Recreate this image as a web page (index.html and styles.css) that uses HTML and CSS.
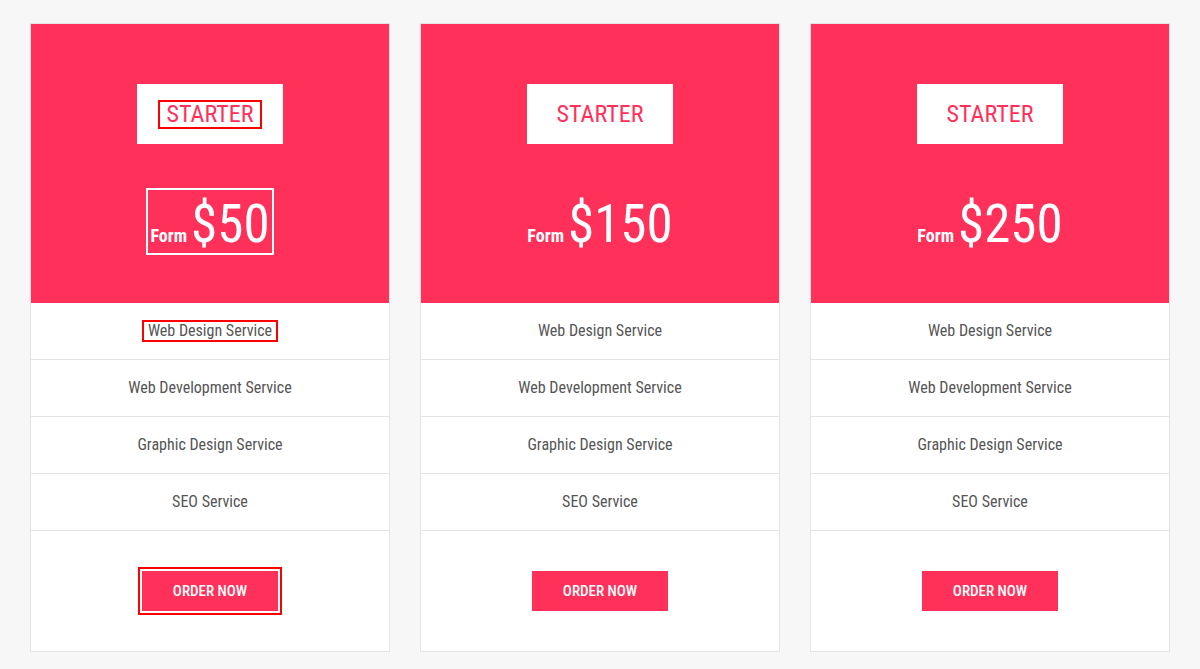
FILE: index.html
```html
<!DOCTYPE html>
<html lang="en">
<head>
<meta charset="utf-8">
<title>Pricing</title>
<link rel="stylesheet" href="styles.css">
</head>
<body>
<div class="pricing">
  <div class="card">
    <div class="card-head">
      <div class="plan"><span class="plan-name hl">STARTER</span></div>
      <div class="price hl-white"><span class="from">Form</span><span class="amount">$50</span></div>
    </div>
    <ul class="features">
      <li><span class="hl">Web Design Service</span></li>
      <li><span>Web Development Service</span></li>
      <li><span>Graphic Design Service</span></li>
      <li><span>SEO Service</span></li>
    </ul>
    <div class="card-foot"><a class="btn hl-btn" href="#">ORDER NOW</a></div>
  </div>
  <div class="card">
    <div class="card-head">
      <div class="plan"><span class="plan-name">STARTER</span></div>
      <div class="price"><span class="from">Form</span><span class="amount">$150</span></div>
    </div>
    <ul class="features">
      <li><span>Web Design Service</span></li>
      <li><span>Web Development Service</span></li>
      <li><span>Graphic Design Service</span></li>
      <li><span>SEO Service</span></li>
    </ul>
    <div class="card-foot"><a class="btn" href="#">ORDER NOW</a></div>
  </div>
  <div class="card">
    <div class="card-head">
      <div class="plan"><span class="plan-name">STARTER</span></div>
      <div class="price"><span class="from">Form</span><span class="amount">$250</span></div>
    </div>
    <ul class="features">
      <li><span>Web Design Service</span></li>
      <li><span>Web Development Service</span></li>
      <li><span>Graphic Design Service</span></li>
      <li><span>SEO Service</span></li>
    </ul>
    <div class="card-foot"><a class="btn" href="#">ORDER NOW</a></div>
  </div>
</div>
</body>
</html>
```
FILE: styles.css
```css
* { box-sizing: border-box; }
html, body { margin: 0; padding: 0; }
body {
  background: #f7f7f7;
  font-family: "Roboto", "Liberation Sans", sans-serif;
  font-stretch: condensed;
}
.pricing {
  display: grid;
  grid-template-columns: repeat(3, 360px);
  gap: 30px;
  padding: 23px 30px 17px;
}
.card {
  background: #fff;
  border: 1px solid #e4e4e4;
}
.card-head {
  background: #ff305a;
  height: 279px;
  padding-top: 60px;
  display: flex;
  flex-direction: column;
  align-items: center;
}
.plan {
  width: 146px;
  height: 60px;
  background: #fff;
  display: flex;
  align-items: center;
  justify-content: center;
}
.plan-name {
  color: #ff305a;
  font-size: 24px;
  line-height: 25px;
  padding: 0 7px;
  border: 2px solid transparent;
}
.plan-name.hl { border-color: #f00; }
.price {
  margin-top: 44px;
  height: 67px;
  padding: 0 2px 0 2px;
  display: flex;
  align-items: flex-end;
  color: #fff;
  border: 2px solid transparent;
}
.price.hl-white { border-color: #fff; }
.from {
  font-size: 18px;
  font-weight: 700;
  margin-right: 4px;
  line-height: 1;
  padding-bottom: 8px;
}
.amount {
  font-size: 53px;
  font-weight: 400;
  line-height: 1;
  padding-bottom: 2px;
}
.features {
  list-style: none;
  margin: 0;
  padding: 0;
}
.features li {
  height: 57px;
  border-bottom: 1px solid #e4e4e4;
  display: flex;
  align-items: center;
  justify-content: center;
  font-size: 16px;
  color: #555;
}
.features li span {
  padding: 0 4px;
  border: 2px solid transparent;
  line-height: 18px;
}
.features li span.hl { border-color: #f00; }
.card-foot {
  height: 120px;
  display: flex;
  align-items: center;
  justify-content: center;
}
.btn {
  display: flex;
  align-items: center;
  justify-content: center;
  width: 136px;
  height: 40px;
  background: #ff305a;
  color: #fff;
  text-decoration: none;
  font-size: 15px;
  font-weight: 500;
}
.btn.hl-btn {
  outline: 2px solid #f00;
  outline-offset: 2px;
}
```
